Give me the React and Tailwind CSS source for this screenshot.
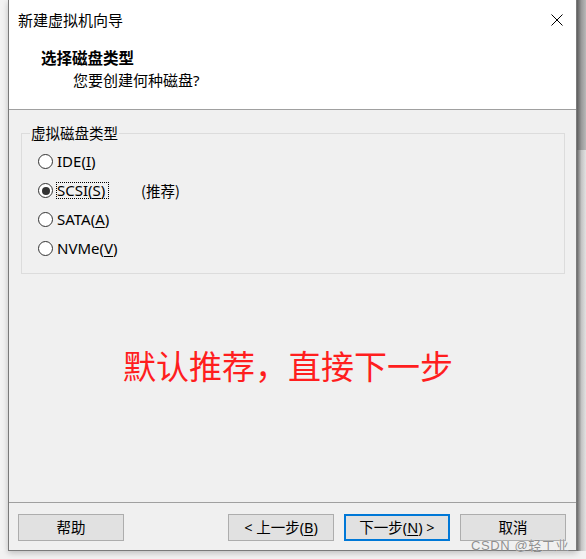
const font = { fontFamily: '"Noto Sans CJK SC", "Noto Sans", sans-serif' };
const latin = { fontFamily: '"Noto Sans", "Noto Sans CJK SC", sans-serif' };
const mark = { fontFamily: '"Liberation Sans", "Noto Sans CJK SC", sans-serif' };

function Radio({ checked }) {
  return (
    <span className="flex h-[15px] w-[15px] shrink-0 items-center justify-center rounded-full border border-[#333333] bg-white">
      {checked && <span className="h-[8px] w-[8px] rounded-full bg-[#333333]" />}
    </span>
  );
}

function Option({ label, mnemonic, checked, focused, extra }) {
  return (
    <div className="flex h-[29px] items-center pl-[16px]">
      <Radio checked={checked} />
      <span
        className={
          focused
            ? 'ml-[3px] w-[53px] border border-dotted border-black text-[15px] leading-[15px]'
            : 'ml-[4px] text-[15px] leading-[15px]'
        }
        style={latin}
      >
        {label}(<u className="underline-offset-2">{mnemonic}</u>)
      </span>
      {extra && <span className="ml-[32px] leading-[15px]">{extra}</span>}
    </div>
  );
}

function Button({ children, primary }) {
  return (
    <button
      type="button"
      className={
        primary
          ? 'h-[27px] w-[106px] border-2 border-[#0078d7] bg-[#e1e1e1] text-[14.5px] leading-none text-black'
          : 'h-[27px] w-[106px] border border-[#adadad] bg-[#e1e1e1] text-[14.5px] leading-none text-black'
      }
      style={latin}
    >
      {children}
    </button>
  );
}

export default function App() {
  return (
    <div className="relative h-[559px] w-[586px] overflow-hidden bg-[#f2f2f2]" style={font}>
      <div className="flex h-[551px]">
        {/* ── Left gutter ─────────────────────────────────────── */}
        <div className="w-[8px] shrink-0 bg-[#f3f3f3]" />

        {/* ── Dialog window ───────────────────────────────────── */}
        <div className="flex w-[569px] shrink-0 flex-col border-x border-b border-[#7a7a7a] bg-[#f0f0f0] shadow-[0_2px_6px_rgba(0,0,0,0.22)]">
          {/* Header */}
          <div className="h-[110px] shrink-0 border-b border-[#a0a0a0] bg-white">
            <div className="flex h-[40px] items-center justify-between pl-[9px] pr-[13px]">
              <span className="text-[15px] leading-[20px] text-black">新建虚拟机向导</span>
              <svg width="12" height="12" viewBox="0 0 12 12" className="text-black">
                <path d="M0.5 0.5 L11.5 11.5 M11.5 0.5 L0.5 11.5" stroke="currentColor" strokeWidth="1" fill="none" />
              </svg>
            </div>
            <div className="pl-[32px] pt-[7px] text-[15.5px] font-bold leading-[20px] text-black">选择磁盘类型</div>
            <div className="mt-[3px] pl-[64px] text-[15px] leading-[20px] text-black">
              您要创建何种磁盘<span style={latin}>?</span>
            </div>
          </div>

          {/* Body */}
          <div className="flex-1 px-[12px] pt-[15px] pr-[11px]">
            <fieldset className="h-[149px] border border-[#dcdcdc] px-[8px] pt-[6px] text-[14.5px] text-black">
              <legend className="px-[1px] leading-[16px]">虚拟磁盘类型</legend>
              <div className="-mx-[8px]">
                <Option label="IDE" mnemonic="I" />
                <Option label="SCSI" mnemonic="S" checked focused extra="(推荐)" />
                <Option label="SATA" mnemonic="A" />
                <Option label="NVMe" mnemonic="V" />
              </div>
            </fieldset>
            <div className="mt-[71px] pl-[102px] text-[33px] leading-[40px] text-[#ff1e1e]">默认推荐，直接下一步</div>
          </div>

          {/* Footer */}
          <div className="flex h-[48px] shrink-0 items-start border-t border-[#a0a0a0] pl-[9px] pr-[10px] pt-[11px]">
            <Button>帮助</Button>
            <div className="ml-auto flex gap-[10px]">
              <Button>
                &lt; 上一步(<u className="underline-offset-2">B</u>)
              </Button>
              <Button primary>
                下一步(<u className="underline-offset-2">N</u>) &gt;
              </Button>
              <Button>取消</Button>
            </div>
          </div>
        </div>

        {/* ── Window behind, right edge ───────────────────────── */}
        <div className="flex w-[9px] shrink-0 flex-col">
          <div className="h-[150px] bg-gradient-to-r from-[#5e5e5e] via-[#9a9a9a] to-[#b9b9b9]" />
          <div className="flex-1 bg-gradient-to-r from-[#6a6a6a] via-[#c4c4c4] to-[#e2e2e2]" />
        </div>
      </div>

      {/* Watermark */}
      <span
        className="absolute left-[471px] top-[540px] text-[13px] leading-[11px] tracking-[0.6px] text-[#8f8f8f] [text-shadow:0_0_1px_#ffffff]"
        style={mark}
      >
        CSDN @轻工业
      </span>
    </div>
  );
}
